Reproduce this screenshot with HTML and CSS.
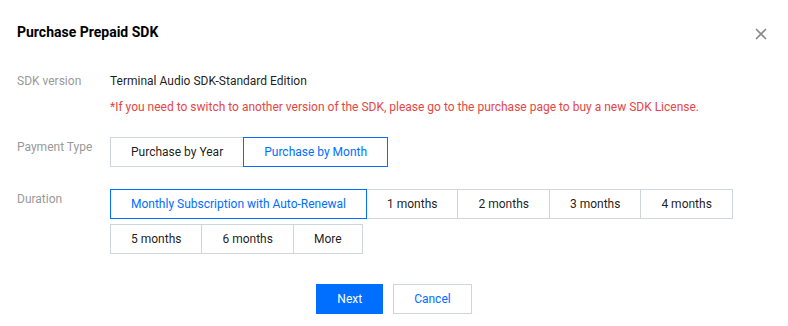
FILE: index.html
```html
<!DOCTYPE html>
<html lang="en">
<head>
  <meta charset="UTF-8" />
  <meta name="viewport" content="width=device-width, initial-scale=1.0" />
  <title>Purchase Prepaid SDK</title>
  <link rel="stylesheet" href="styles.css">
</head>
<body>
  <div class="dialog">
    <div class="dialog-header">
      <h3>Purchase Prepaid SDK</h3>
      <button type="button" class="close-btn" aria-label="Close">
        <svg width="12" height="12" viewBox="0 0 12 12">
          <path d="M1 1L11 11M11 1L1 11" stroke="#888" stroke-width="1.6" fill="none" />
        </svg>
      </button>
    </div>

    <div class="form">
      <div class="form-row">
        <div class="form-label">SDK version</div>
        <div class="form-value">
          <p class="text">Terminal Audio SDK-Standard Edition</p>
          <p class="tip">*If you need to switch to another version of the SDK, please go to the purchase page to buy a new SDK License.</p>
        </div>
      </div>

      <div class="form-row">
        <div class="form-label">Payment Type</div>
        <div class="form-value">
          <div class="segment">
            <button type="button" class="seg-btn">Purchase by Year</button>
            <button type="button" class="seg-btn is-selected">Purchase by Month</button>
          </div>
        </div>
      </div>

      <div class="form-row">
        <div class="form-label">Duration</div>
        <div class="form-value">
          <div class="segment segment-wrap">
            <button type="button" class="seg-btn is-selected">Monthly Subscription with Auto-Renewal</button>
            <button type="button" class="seg-btn">1 months</button>
            <button type="button" class="seg-btn">2 months</button>
            <button type="button" class="seg-btn">3 months</button>
            <button type="button" class="seg-btn">4 months</button>
            <button type="button" class="seg-btn">5 months</button>
            <button type="button" class="seg-btn">6 months</button>
            <button type="button" class="seg-btn">More</button>
          </div>
        </div>
      </div>
    </div>

    <div class="dialog-footer">
      <button type="button" class="btn btn-primary">Next</button>
      <button type="button" class="btn">Cancel</button>
    </div>
  </div>
</body>
</html>
```

FILE: styles.css
```css
body {
  margin: 0;
  background: #fff;
  font-family: Roboto, "Liberation Sans", sans-serif;
  font-size: 12px;
  color: rgba(0, 0, 0, 0.9);
}

button {
  font-family: inherit;
  font-size: 12px;
  cursor: pointer;
}

.dialog {
  padding: 20px 17px 12px;
}

.dialog-header {
  display: flex;
  justify-content: space-between;
  align-items: center;
  height: 24px;
}

.dialog-header h3 {
  margin: 0;
  font-size: 14px;
  font-weight: bold;
  line-height: 24px;
  color: #000;
}

.close-btn {
  border: none;
  background: none;
  padding: 0;
  width: 12px;
  height: 12px;
  margin-right: 4px;
  margin-top: 4px;
}

.close-btn svg { display: block; }

.form {
  margin-top: 27px;
}

.form-row {
  display: flex;
  margin-bottom: 22px;
}

.form-label {
  width: 93px;
  flex-shrink: 0;
  color: #999;
  line-height: 20px;
}

.form-value { flex: 1; }

.text, .tip {
  margin: 0;
  line-height: 20px;
}

.tip {
  color: #e54545;
  margin-top: 6px;
  margin-bottom: -2px;
}

.segment {
  display: flex;
}

.segment-wrap {
  flex-wrap: wrap;
  row-gap: 5px;
  width: 660px;
}

.seg-btn {
  position: relative;
  height: 30px;
  padding: 0 20px;
  margin: 0 0 0 -1px;
  border: 1px solid #cfd5de;
  background: #fff;
  color: rgba(0, 0, 0, 0.9);
  line-height: 28px;
}

.seg-btn:first-child { margin-left: 0; }

.segment-wrap .seg-btn:nth-child(6) { margin-left: 0; }

.seg-btn.is-selected {
  border-color: #006eff;
  color: #006eff;
  z-index: 1;
}

.dialog-footer {
  display: flex;
  justify-content: center;
  gap: 10px;
  margin-top: 30px;
}

.btn {
  height: 30px;
  padding: 0 20px;
  border: 1px solid #cfd5de;
  background: #fff;
  color: #006eff;
}

.btn-primary {
  background: #006eff;
  border-color: #006eff;
  color: #fff;
}
```
